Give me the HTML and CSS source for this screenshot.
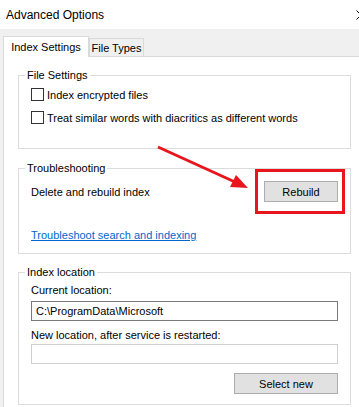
FILE: index.html
```html
<!DOCTYPE html>
<html lang="en">
<head>
    <meta charset="UTF-8">
    <title>Advanced Options</title>
    <link rel="stylesheet" href="styles.css">
</head>
<body>
    <div class="window">
        <!-- Title bar -->
        <div class="titlebar">
            <span class="title">Advanced Options</span>
            <svg class="close" width="10" height="10" viewBox="0 0 10 10">
                <path d="M0.5 0.5 L9.5 9.5 M9.5 0.5 L0.5 9.5" stroke="#000" stroke-width="1" fill="none"/>
            </svg>
        </div>

        <!-- Tabs -->
        <div class="tabstrip">
            <div class="tab active">Index Settings</div>
            <div class="tab">File Types</div>
        </div>

        <div class="panel">
            <fieldset class="group group-files">
                <legend>File Settings</legend>
                <label class="check"><span class="box"></span>Index encrypted files</label>
                <label class="check"><span class="box"></span>Treat similar words with diacritics as different words</label>
            </fieldset>

            <fieldset class="group group-trouble">
                <legend>Troubleshooting</legend>
                <div class="rebuild-row">
                    <span>Delete and rebuild index</span>
                    <div class="btn-wrap">
                        <button class="btn btn-rebuild">Rebuild</button>
                        <span class="highlight"></span>
                    </div>
                </div>
                <a class="link" href="#">Troubleshoot search and indexing</a>
            </fieldset>

            <fieldset class="group group-location">
                <legend>Index location</legend>
                <div class="field-label">Current location:</div>
                <div class="textbox">C:\ProgramData\Microsoft</div>
                <div class="field-label label-new">New location, after service is restarted:</div>
                <div class="textbox disabled"></div>
                <div class="actions">
                    <button class="btn btn-select">Select new</button>
                </div>
            </fieldset>
        </div>

        <!-- Annotation arrow -->
        <svg class="arrow" width="359" height="407" viewBox="0 0 359 407">
            <line x1="158" y1="147" x2="235" y2="182" stroke="#e8161c" stroke-width="3"/>
            <polygon points="248,188 230,187 236,175" fill="#e8161c"/>
        </svg>
    </div>
</body>
</html>
```

FILE: styles.css
```css
body {
    margin: 0;
    font-family: "Liberation Sans", Arial, sans-serif;
    font-size: 11px;
    color: #000;
    background-color: #f0f0f0;
    width: 359px;
    height: 407px;
    overflow: hidden;
}

.window {
    position: relative;
    height: 407px;
}

.titlebar {
    height: 29px;
    background-color: #fff;
    display: flex;
    align-items: center;
    justify-content: space-between;
    padding-left: 6px;
    font-size: 12px;
}

.close {
    margin-right: -7px;
    flex: none;
}

/* Tabs */
.tabstrip {
    height: 27px;
    display: flex;
    align-items: flex-end;
    padding-left: 3px;
}

.tab {
    box-sizing: border-box;
    height: 18px;
    width: 55px;
    border: 1px solid #d9d9d9;
    border-bottom: none;
    display: flex;
    align-items: center;
    justify-content: center;
    background-color: #f0f0f0;
}

.tab.active {
    height: 21px;
    width: 86px;
    margin-bottom: -1px;
    background-color: #fff;
    position: relative;
    z-index: 1;
}

.panel {
    margin-left: 3px;
    height: 351px;
    background-color: #fff;
    border-top: 1px solid #d9d9d9;
    border-left: 1px solid #d9d9d9;
    padding: 12px 0 0 14px;
}

/* Group boxes */
.group {
    box-sizing: border-box;
    width: 333px;
    margin: 0;
    padding: 0 12px;
    border: 1px solid #dcdcdc;
    min-inline-size: auto;
}

.group legend {
    padding: 0 2px;
    margin-left: -6px;
    line-height: 13px;
}

.group-files {
    padding-top: 1px;
    padding-bottom: 19px;
}

.check {
    height: 23px;
    display: flex;
    align-items: center;
}

.box {
    width: 13px;
    height: 13px;
    box-sizing: border-box;
    border: 1px solid #333;
    background-color: #fff;
    margin-right: 3px;
    flex: none;
}

.group-trouble {
    margin-top: 13px;
    padding-top: 6px;
    padding-bottom: 11px;
}

.rebuild-row {
    display: flex;
    justify-content: space-between;
    align-items: center;
    height: 21px;
}

.btn-wrap {
    position: relative;
}

.btn {
    font: inherit;
    color: #000;
    height: 21px;
    padding: 0;
    background-color: #e1e1e1;
    border: 1px solid #adadad;
    display: block;
}

.btn-rebuild {
    width: 74px;
}

.highlight {
    position: absolute;
    left: -9px;
    right: -7px;
    top: -12px;
    bottom: -12px;
    border: 3px solid #e8161c;
    pointer-events: none;
}

.link {
    display: block;
    margin-top: 27px;
    line-height: 13px;
    color: #0066cc;
    text-decoration: underline;
}

.group-location {
    margin-top: 12px;
    padding-top: 5px;
    padding-bottom: 10px;
}

.field-label {
    line-height: 13px;
}

.label-new {
    margin-top: 8px;
}

.textbox {
    box-sizing: border-box;
    height: 20px;
    margin-top: 4px;
    border: 1px solid #7a7a7a;
    padding-left: 4px;
    display: flex;
    align-items: center;
}

.textbox.disabled {
    margin-top: 2px;
    border-color: #d0d0d0;
}

.actions {
    display: flex;
    justify-content: flex-end;
    margin-top: 9px;
}

.btn-select {
    width: 104px;
}

.arrow {
    position: absolute;
    left: 0;
    top: 0;
    pointer-events: none;
}
```
